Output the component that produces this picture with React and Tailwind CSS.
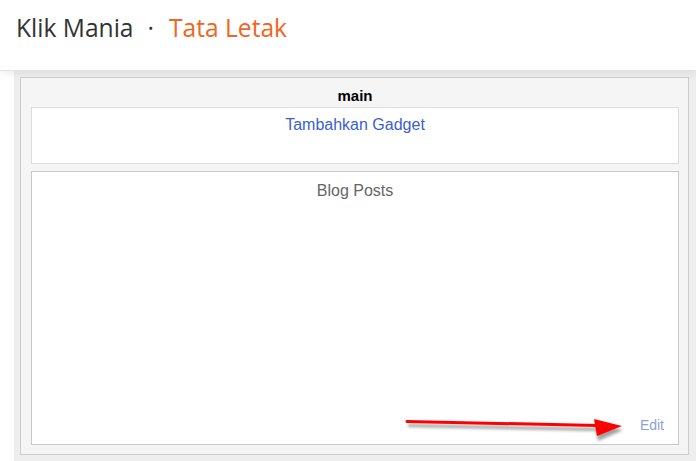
export default function App() {
  return (
    <div className="w-[696px] h-[461px] bg-white overflow-hidden relative font-['Liberation_Sans',Arial,sans-serif]">
      {/* Header */}
      <header className="relative z-10 h-[71px] bg-white border-b border-[#e3e3e3] shadow-[0_2px_8px_rgba(0,0,0,0.08)] flex items-start pt-[11px] pl-[16px]">
        <h1 className="font-['Open_Sans',sans-serif] text-[24.6px] leading-[34px] text-[#333333]">
          Klik Mania
          <span className="ml-[14px] mr-[15px] text-[#333333]">·</span>
          <span className="text-[#f26522]">Tata Letak</span>
        </h1>
      </header>

      {/* Layout body */}
      <div className="pl-[14px]">
        <div className="bg-[#eeeeee] pt-[6px] pl-[6px] pr-[7px] pb-[8px]">
          <div className="border border-[#cccccc] bg-[#f5f5f5] pl-[10px] pr-[9px] pb-[9px]">
            <div className="h-[29px] pt-[9px] text-center text-[15px] leading-[18px] font-bold text-black">
              main
            </div>
            <div className="h-[57px] border border-[#dcdcdc] bg-white flex justify-center pt-[7px]">
              <span className="text-[16px] leading-[19px] text-[#3b5fd0]">Tambahkan Gadget</span>
            </div>
            <div className="mt-[7px] h-[274px] border border-[#c8c8c8] bg-white flex flex-col">
              <div className="pt-[9px] text-center text-[16px] leading-[19px] text-[#666666]">Blog Posts</div>
              <div className="mt-auto pb-[11px] pr-[14px] flex justify-end">
                <span className="text-[14px] leading-[16px] text-[#8ea2d6]">Edit</span>
              </div>
            </div>
          </div>
        </div>
      </div>

      {/* Red annotation arrow */}
      <svg className="absolute left-0 top-0" width="696" height="461" viewBox="0 0 696 461">
        <defs>
          <filter id="sh" x="-10%" y="-200%" width="120%" height="500%">
            <feGaussianBlur stdDeviation="1.6" />
          </filter>
        </defs>
        <g filter="url(#sh)" opacity="0.55" transform="translate(1 4)">
          <path d="M407 421.5 L598 425.5" stroke="#555" strokeWidth="3" fill="none" />
          <path d="M594 419 L622 426 L597 437 Z" fill="#555" />
        </g>
        <path d="M407 421.5 L598 425.5" stroke="#ff0000" strokeWidth="3" strokeLinecap="round" fill="none" />
        <path d="M594 419 L622 426 L597 436 Z" fill="#ff0000" />
      </svg>
    </div>
  );
}
